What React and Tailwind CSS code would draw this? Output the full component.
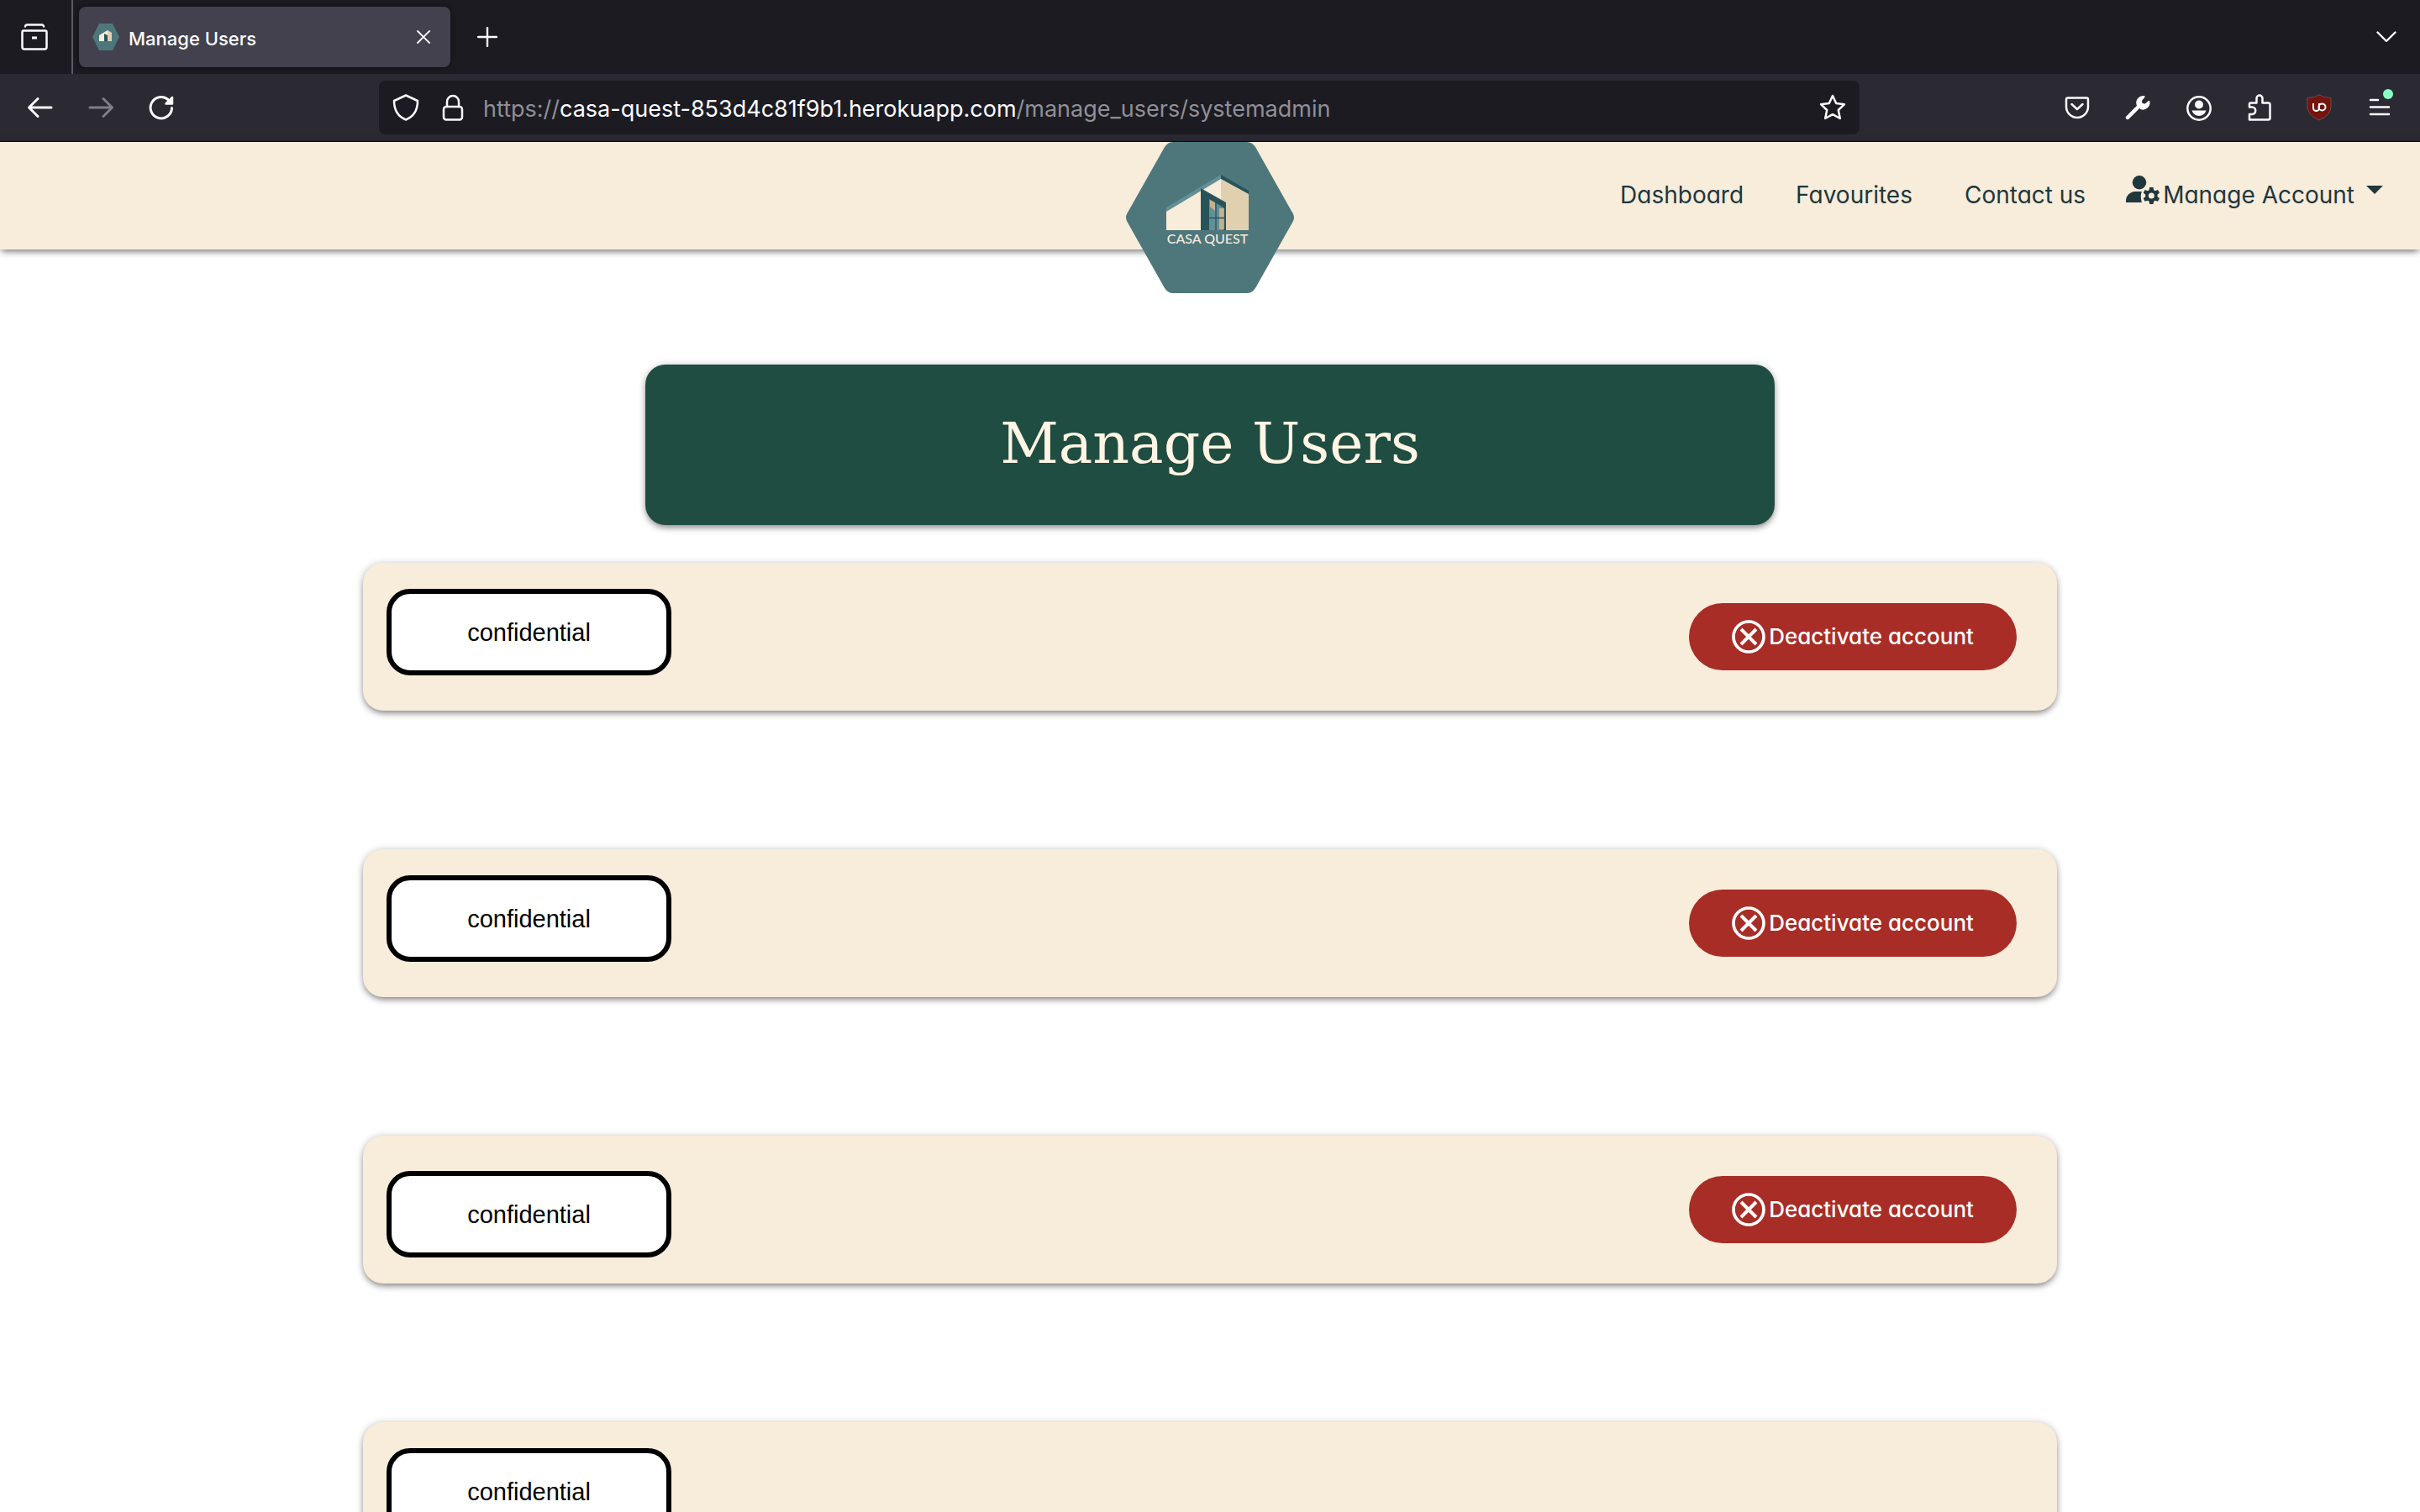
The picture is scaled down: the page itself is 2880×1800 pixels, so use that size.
import React from "react";

const iconButton = "flex size-12 items-center justify-center";

function HouseMark({ className }) {
  return (
    <svg className={className} viewBox="0 0 98 66" aria-hidden="true">
      <path d="M0 39 65 0v7L0 45z" fill="#629097" />
      <path d="M65 0 98 19v5L65 5z" fill="#27545a" />
      <path d="M0 44 65 5v61H0z" fill="#f8ecdb" />
      <path d="M65 5 98 23v43H65z" fill="#e1d0b0" />
      <path d="M41 16 71 33v33H41z" fill="#27545a" />
      <path d="M51 29 68 39v27H51z" fill="#629097" />
      <path d="M52 30l6 3v10l-6-5z" fill="#c7b18d" />
      <path d="M63 40h6v25h-6z" fill="#c7b18d" />
      <path d="M59 32v34M51 51.500h18M69.500 38v28" stroke="#27545a" strokeWidth="1.300" fill="none" />
    </svg>
  );
}

function Hexagon({ className }) {
  return (
    <svg className={className} viewBox="0 0 200 180" preserveAspectRatio="none" aria-hidden="true">
      <path d="M56 0h88q6 0 10 6l44 78q4 6 0 12l-44 78q-4 6-10 6H56q-6 0-10-6L2 96q-4-6 0-12L46 6q4-6 10-6z" fill="#4e777b" />
    </svg>
  );
}

function Icon({ children, className = "size-8", color = "#fbfbfe" }) {
  return (
    <svg className={className} viewBox="0 0 32 32" fill="none" stroke={color} strokeWidth="2.500" strokeLinecap="round" strokeLinejoin="round" aria-hidden="true">
      {children}
    </svg>
  );
}

function TabBar() {
  return (
    <div className="flex h-[88px] items-center bg-[#1c1b22]">
      <div className="flex h-full w-[87px] items-center justify-center border-r-2 border-[#5b5b66] pr-1">
        <button className={iconButton} aria-label="View recent browsing">
          <Icon>
            <path d="M5 3.500Q5.500 1.500 7 1.500h18q1.500 0 2 2" />
            <path d="M3 8.500h26q1.500 0 1.500 2V28q0 2.500-2.500 2.500H4Q1.500 30.500 1.500 28V10.500q0-2 1.500-2z" />
            <path d="M13 17h6" strokeWidth="3" strokeLinecap="butt" />
          </Icon>
        </button>
      </div>
      <div className="ml-[7px] flex h-[72px] w-[442px] items-center rounded-lg bg-[#42414d] pl-4 pr-4 shadow-[0_0_6px_rgba(0,0,0,0.5)]">
        <span className="flex size-8 items-center justify-center">
          <svg viewBox="0 0 32 32" className="size-8" aria-hidden="true">
            <path d="M8 0h16l8 16-8 16H8L0 16z" fill="#4e777b" />
            <path d="M8 14 18 8v13H8z" fill="#f8ecdb" />
            <path d="M18 8l5 3v10h-5z" fill="#e1d0b0" />
            <path d="M14 12l4 2v7h-4z" fill="#27545a" />
          </svg>
        </span>
        <span className="ml-[11px] grow pt-1 text-[22px] leading-8 font-medium text-[#fbfbfe]">Manage Users</span>
        <button className="flex size-8 items-center justify-center" aria-label="Close tab">
          <svg viewBox="0 0 16 16" className="size-4" stroke="#fbfbfe" strokeWidth="1.800" strokeLinecap="round" aria-hidden="true">
            <path d="M1 1l14 14M15 1 1 15" />
          </svg>
        </button>
      </div>
      <button className={iconButton + " ml-5"} aria-label="New tab">
        <svg viewBox="0 0 24 24" className="size-6" stroke="#fbfbfe" strokeWidth="2.400" strokeLinecap="round" aria-hidden="true">
          <path d="M12 1v22M1 12h22" />
        </svg>
      </button>
      <button className={iconButton + " mr-4 ml-auto"} aria-label="List all tabs">
        <svg viewBox="0 0 24 14" className="h-[14px] w-6" fill="none" stroke="#fbfbfe" strokeWidth="2.400" strokeLinecap="round" strokeLinejoin="round" aria-hidden="true">
          <path d="M1.500 1.500 12 12 22.500 1.500" />
        </svg>
      </button>
    </div>
  );
}

function Toolbar() {
  return (
    <div className="flex h-[81px] items-center border-b border-[#0c0c0d] bg-[#2b2a33]">
      <div className="flex w-[451px] shrink-0 items-center gap-6 pl-6">
        <button className={iconButton} aria-label="Back">
          <Icon><path d="M29 16H3M13 5.500 2.500 16 13 26.500" strokeWidth="3" /></Icon>
        </button>
        <button className={iconButton} aria-label="Forward">
          <Icon color="#7f7e85"><path d="M3 16h26M19 5.500 29.500 16 19 26.500" strokeWidth="3" /></Icon>
        </button>
        <button className={iconButton} aria-label="Reload">
          <Icon>
            <path d="M28.500 16.500A12.700 12.700 0 1 1 24 6.500" strokeWidth="3" />
            <path d="M29 4v7.500h-7.500z" fill="#fbfbfe" />
          </Icon>
        </button>
      </div>
      <div className="flex h-16 grow items-center rounded-lg bg-[#1c1b22] pl-4">
        <Icon><path d="M16 1.500 30 8c0 10-4 18.500-14 22.500C6 26.500 2 18 2 8z" /></Icon>
        <span className="ml-6">
          <Icon>
            <rect x="5" y="15" width="22" height="15.500" rx="3" />
            <path d="M9 15V9a7 7 0 0 1 14 0v6" />
          </Icon>
        </span>
        <p className="ml-5 grow pt-1 text-[27px] leading-10 whitespace-nowrap text-[#8f8f96]">
          https://<span className="text-[#fbfbfe]">casa-quest-853d4c81f9b1.herokuapp.com</span>/manage_users/systemadmin
        </p>
        <button className={iconButton + " mr-2"} aria-label="Bookmark this page">
          <Icon><path d="M16 2l4.200 9 9.800 1.200-7.200 6.800 2 10L16 24.200 7.200 29l2-10L2 12.200 11.800 11z" /></Icon>
        </button>
      </div>
      <div className="flex w-[667px] shrink-0 items-center justify-end gap-6 pr-6">
        <button className={iconButton} aria-label="Save to Pocket">
          <Icon>
            <path d="M5 4.500h22q2 0 2 2V15a13 13 0 0 1-26 0V6.500q0-2 2-2z" />
            <path d="M9.500 12l6.500 6 6.500-6" />
          </Icon>
        </button>
        <button className={iconButton} aria-label="Developer tools">
          <Icon>
            <path d="M4 28 17 15" strokeWidth="4.500" />
            <path d="M24 3a7.500 7.500 0 0 0-8.500 10l4.500 4.500a7.500 7.500 0 0 0 9.500-9l-5 4-3.500-1-1-3.500z" fill="#fbfbfe" strokeWidth="1.500" />
          </Icon>
        </button>
        <button className={iconButton} aria-label="Account">
          <Icon>
            <circle cx="17" cy="17" r="13.700" />
            <circle cx="17" cy="12.500" r="5" fill="#fbfbfe" stroke="none" />
            <path d="M8.500 19.500h17q-2 6.500-8.500 6.500t-8.500-6.500z" fill="#fbfbfe" stroke="none" />
          </Icon>
        </button>
        <button className={iconButton} aria-label="Extensions">
          <Icon><path d="M5 30.500V24h3a4 4 0 0 0 0-8.500H5V12q0-1.500 1.500-1.500h7V5a3.500 3.500 0 0 1 7 0v5.500h7q2 0 2 2v16q0 2-2 2z" /></Icon>
        </button>
        <button className={iconButton} aria-label="uBlock Origin">
          <Icon>
            <path d="M16 1q6 3.500 14 3.500V15q0 10-14 16Q2 25 2 15V4.500Q10 4.500 16 1z" fill="#75140c" stroke="#6b4a50" strokeWidth="1" />
            <path d="M9 11v5.500a3.500 3.500 0 0 0 7 0V11" strokeWidth="2" strokeLinecap="butt" />
            <circle cx="19.500" cy="15.500" r="4" strokeWidth="2" />
          </Icon>
        </button>
        <button className={iconButton + " relative"} aria-label="Open application menu">
          <Icon><path d="M5 7h9M5 15.500h22M5 24h22" /></Icon>
          <span className="absolute top-0.5 right-2 size-3 rounded-full bg-[#88ffc4]" />
        </button>
      </div>
    </div>
  );
}

function SiteHeader() {
  return (
    <header className="relative flex h-32 justify-end bg-[#f8ecdb] shadow-[0_4px_8px_-2px_rgba(0,0,0,0.5),0_0_10px_rgba(0,0,0,0.15)]">
      <a href="#home" aria-label="Casa Quest" className="absolute top-0 left-1/2 flex h-[180px] w-[200px] -translate-x-1/2 flex-col items-center pt-[39px] pr-1.5">
        <Hexagon className="absolute inset-0 size-full" />
        <HouseMark className="relative h-[66px] w-[98px]" />
        <span className="relative font-['Lato',sans-serif] text-[16px] leading-5 font-medium whitespace-nowrap text-[#f8ecdb]">CASA QUEST</span>
      </a>
      <nav className="mt-[43px] mr-11 flex h-10 items-center gap-12 text-[28px] leading-10 whitespace-nowrap text-[#20373b] [font-feature-settings:'cv11']">
        <div className="flex gap-[62px]">
          <a href="#dashboard">Dashboard</a>
          <a href="#favourites">Favourites</a>
          <a href="#contact">Contact us</a>
        </div>
        <button className="flex items-center whitespace-nowrap">
          <svg viewBox="0 -32 640 544" className="mr-1 mb-3 h-[34px] w-10" fill="#20373b" aria-hidden="true">
            <circle cx="256" cy="100" r="132" />
            <path d="M178 270h91c12 0 24 1 34 3C280 320 276 400 302 480H14c-8 0-14-6-14-14V448C0 350 80 270 178 270z" />
            <path fillRule="evenodd" d="M452 190h68l10 52 28 16 50-18 32 56-40 36v36l40 36-32 56-50-18-28 16-10 52h-68l-10-52-28-16-50 18-32-56 40-36v-36l-40-36 32-56 50 18 28-16zM486 294a56 56 0 1 0 0 112a56 56 0 1 0 0-112z" />
          </svg>
          Manage Account
          <svg viewBox="0 0 20 10" className="mb-3 ml-[14px] h-[10px] w-5" fill="#20373b" aria-hidden="true"><path d="M0 0h20L10 10z" /></svg>
        </button>
      </nav>
    </header>
  );
}

const users = [
  { id: 1, name: "confidential", active: true, offset: "mt-[31px]" },
  { id: 2, name: "confidential", active: true, offset: "mt-[31px]" },
  { id: 3, name: "confidential", active: true, offset: "mt-[42px]" },
  { id: 4, name: "confidential", active: false, offset: "mt-[31px]" },
];

function UserCard({ user }) {
  return (
    <li className="flex h-44 items-start justify-between rounded-3xl bg-[#f8ecdb] pr-12 pl-7 shadow-[0_4px_8px_-2px_rgba(0,0,0,0.5),0_0_10px_rgba(0,0,0,0.15)]">
      <div className={"flex h-[103px] w-[339px] items-center justify-center rounded-[28px] border-6 border-black bg-white font-['Liberation_Sans',sans-serif] text-[29px] leading-10 text-black " + user.offset}>
        {user.name}
      </div>
      {user.active && (
        <button className="mt-12 flex h-20 w-[390px] items-center justify-center rounded-full bg-[#a82d26] text-[26px] leading-10 font-medium whitespace-nowrap text-white [font-feature-settings:'cv11']">
          <svg viewBox="0 0 40 40" className="mr-1 size-10" fill="none" stroke="white" aria-hidden="true">
            <circle cx="20" cy="20" r="18" strokeWidth="3.700" />
            <path d="M11 11l18 18M29 11 11 29" strokeWidth="4" />
          </svg>
          Deactivate account
        </button>
      )}
    </li>
  );
}

export default function App() {
  return (
    <div className="h-screen overflow-hidden bg-white font-['Inter',sans-serif]">
      <TabBar />
      <Toolbar />
      <SiteHeader />
      <main className="mx-auto mt-[137px] w-[70%]">
        <h1 className="mx-auto flex h-[191px] w-2/3 items-center justify-center rounded-3xl bg-[#204d42] pb-1 font-['DejaVu_Serif',serif] text-[68px] leading-none whitespace-nowrap text-[#fff5e4] shadow-[0_4px_8px_-2px_rgba(0,0,0,0.5),0_0_10px_rgba(0,0,0,0.15)]">
          Manage Users
        </h1>
        <ul className="mt-[45px] flex flex-col gap-[165px]">
          {users.map((user) => (
            <UserCard key={user.id} user={user} />
          ))}
        </ul>
      </main>
    </div>
  );
}
